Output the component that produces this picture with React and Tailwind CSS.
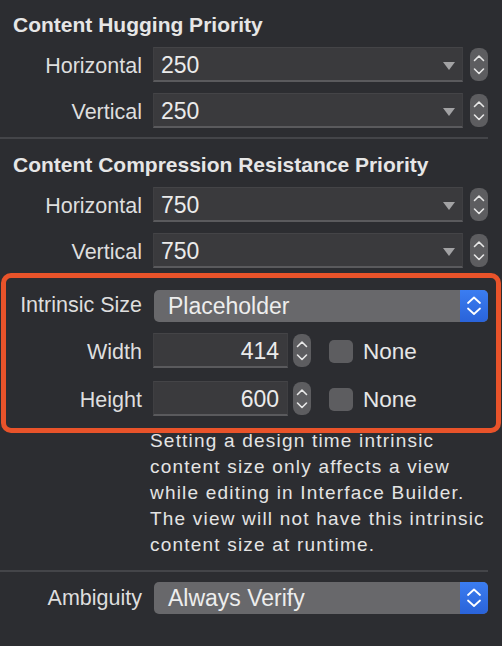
import React from "react";

const Stepper = () => (
    <svg width="18" height="33" viewBox="0 0 18 33" className="shrink-0">
        <rect x="0" y="0" width="18" height="33" rx="8" fill="#5d5d60" />
        <path d="M4.5 12.5 L9 8 L13.5 12.5" fill="none" stroke="#e8e8e8" strokeWidth="1.6" strokeLinecap="round" strokeLinejoin="round" />
        <path d="M4.5 21 L9 25.5 L13.5 21" fill="none" stroke="#e8e8e8" strokeWidth="1.6" strokeLinecap="round" strokeLinejoin="round" />
    </svg>
);

const PopupArrows = () => (
    <svg width="28" height="32" viewBox="0 0 28 32">
        <path d="M8 13 L14 7.5 L20 13" fill="none" stroke="#ffffff" strokeWidth="1.8" strokeLinecap="round" strokeLinejoin="round" />
        <path d="M8 18.5 L14 24 L20 18.5" fill="none" stroke="#ffffff" strokeWidth="1.8" strokeLinecap="round" strokeLinejoin="round" />
    </svg>
);

// number field with a pull-down triangle and a stepper beside it
const ComboRow = ({ label, value }) => (
    <div className="flex items-center">
        <div className="w-[142px] pt-[4px] text-right text-[21.5px] leading-none text-[#dedede]">
            {label}
        </div>
        <div className="ml-[11px] flex h-[35px] w-[310px] items-center justify-between border border-[#3f3f42] border-t-[#444447] border-b-2 border-b-[#5a5a5d] bg-[#3a3a3d] pl-[7px] pr-[7px]">
            <span className="pt-[3px] text-[23px] leading-none text-[#ebebeb]">{value}</span>
            <svg width="12" height="8" viewBox="0 0 12 8" className="mt-[3px]">
                <polygon points="0,0 12,0 6,8" fill="#a2a2a4" />
            </svg>
        </div>
        <div className="ml-[7px]">
            <Stepper />
        </div>
    </div>
);

const Popup = ({ text }) => (
    <div className="flex h-[32px] w-[334px] items-stretch overflow-hidden rounded-[5px] bg-[#68686b]">
        <div className="flex flex-1 items-center pl-[14px] text-[23px] leading-none text-[#ededed]">
            {text}
        </div>
        <div className="w-[28px] bg-gradient-to-b from-[#3b7df1] to-[#2a63d9]">
            <PopupArrows />
        </div>
    </div>
);

const SizeRow = ({ label, value }) => (
    <div className="flex items-center">
        <div className="w-[136px] pt-[4px] text-right text-[21.5px] leading-none text-[#dedede]">
            {label}
        </div>
        <div className="ml-[11px] flex h-[35px] w-[135px] items-center justify-end border border-[#3f3f42] border-t-[#444447] border-b-2 border-b-[#5a5a5d] bg-[#3a3a3d] pr-[8px]">
            <span className="pt-[3px] text-[23px] leading-none text-[#ebebeb]">{value}</span>
        </div>
        <div className="ml-[5px]">
            <Stepper />
        </div>
        <div className="ml-[18px] mt-[2px] h-[23px] w-[24px] rounded-[5px] bg-[#5d5d60]" />
        <div className="ml-[10px] pt-[3px] text-[22.5px] leading-none text-[#e6e6e6]">None</div>
    </div>
);

const App = () => {
    return (
        <div className="h-[646px] w-[502px] overflow-hidden bg-[#2c2d31] font-['Liberation_Sans',Arial,sans-serif] text-[#dedede]">
            <h2 className="pl-[13px] pt-[13px] text-[21px] font-bold leading-[24px] text-[#e6e6e6]">
                Content Hugging Priority
            </h2>
            <div className="mt-[10px] flex flex-col gap-[11px]">
                <ComboRow label="Horizontal" value="250" />
                <ComboRow label="Vertical" value="250" />
            </div>

            <div className="mt-[9px] h-[2px] w-[488px] bg-[#444549]" />

            <h2 className="mt-[14px] pl-[13px] text-[21px] font-bold leading-[24px] text-[#e6e6e6]">
                Content Compression Resistance Priority
            </h2>
            <div className="mt-[10px] flex flex-col gap-[11px]">
                <ComboRow label="Horizontal" value="750" />
                <ComboRow label="Vertical" value="750" />
            </div>

            {/* highlighted intrinsic size block */}
            <div className="ml-[1px] mt-[5px] w-[500px] rounded-[10px] border-[5px] border-[#e9532a] pb-[12px] pt-[12px]">
                <div className="flex items-center">
                    <div className="w-[136px] text-right text-[21.5px] leading-none text-[#dedede]">
                        Intrinsic Size
                    </div>
                    <div className="ml-[12px]">
                        <Popup text="Placeholder" />
                    </div>
                </div>
                <div className="mt-[11px]">
                    <SizeRow label="Width" value="414" />
                </div>
                <div className="mt-[13px]">
                    <SizeRow label="Height" value="600" />
                </div>
            </div>

            <div className="-mt-[5px] pl-[150px] text-[19px] leading-[26px] tracking-[1.2px] text-[#e4e4e4]">
                <div>Setting a design time intrinsic</div>
                <div>content size only affects a view</div>
                <div>while editing in Interface Builder.</div>
                <div>The view will not have this intrinsic</div>
                <div>content size at runtime.</div>
            </div>

            <div className="mt-[12px] h-[2px] w-[488px] bg-[#444549]" />

            <div className="mt-[10px] flex items-center">
                <div className="w-[142px] pt-[2px] text-right text-[21.5px] leading-none text-[#dedede]">
                    Ambiguity
                </div>
                <div className="ml-[12px]">
                    <Popup text="Always Verify" />
                </div>
            </div>
        </div>
    );
};

export default App;
